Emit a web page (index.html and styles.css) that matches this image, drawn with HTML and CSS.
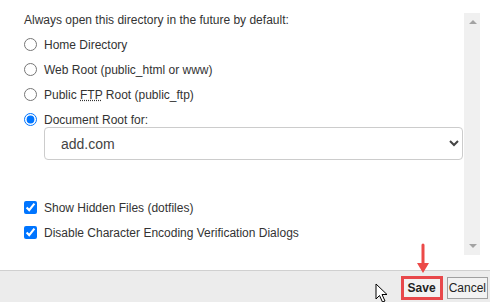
FILE: index.html
```html
<!DOCTYPE html>
<html lang="en">
<head>
    <meta charset="UTF-8">
    <title>Settings</title>
    <link rel="stylesheet" href="styles.css">
</head>
<body>
    <div class="dialog">
        <div class="panel">
            <div class="content">
                <p class="lead">Always open this directory in the future by default:</p>
                <label class="option"><input type="radio" name="dir"><span>Home Directory</span></label>
                <label class="option"><input type="radio" name="dir"><span>Web Root (public_html or www)</span></label>
                <label class="option"><input type="radio" name="dir"><span>Public <abbr title="File Transfer Protocol">FTP</abbr> Root (public_ftp)</span></label>
                <label class="option"><input type="radio" name="dir" checked><span>Document Root for:</span></label>
                <div class="select-wrap">
                    <select class="domain">
                        <option>add.com</option>
                    </select>
                </div>
                <div class="checks">
                    <label class="option"><input type="checkbox" checked><span>Show Hidden Files (dotfiles)</span></label>
                    <label class="option"><input type="checkbox" checked><span>Disable Character Encoding Verification Dialogs</span></label>
                </div>
            </div>
            <div class="scrollbar">
                <span class="arrow up"></span>
                <span class="arrow down"></span>
            </div>
        </div>
        <div class="footer">
            <span class="cursor">
                <svg width="14" height="20" viewBox="0 0 14 20">
                    <path d="M1 1 L1 16 L4.5 12.5 L7.5 19 L10 18 L7 11.5 L12 11.5 Z" fill="#fff" stroke="#000" stroke-width="1" stroke-linejoin="round"/>
                </svg>
            </span>
            <span class="pointer">
                <svg width="14" height="32" viewBox="0 0 14 32">
                    <line x1="7" y1="2" x2="7" y2="22" stroke="#ec4a48" stroke-width="3" stroke-linecap="round"/>
                    <path d="M1 20 L13 20 L7 30 Z" fill="#ec4a48"/>
                </svg>
            </span>
            <button class="btn save">Save</button>
            <button class="btn cancel">Cancel</button>
        </div>
    </div>
</body>
</html>
```

FILE: styles.css
```css
body {
    margin: 0;
    font-family: "Liberation Sans", Arial, sans-serif;
    font-size: 12px;
    color: #333;
    background: #fff;
}

.dialog {
    width: 490px;
    height: 302px;
    display: flex;
    flex-direction: column;
}

.panel {
    flex: 1;
    display: flex;
}

.content {
    flex: 1;
    padding: 13px 0 0 24px;
}

.lead {
    margin: 0 0 4px;
    line-height: 15px;
}

.option {
    display: flex;
    align-items: center;
    height: 25px;
    gap: 7px;
}

.option input {
    margin: 0;
    width: 13px;
    height: 13px;
}

abbr {
    text-decoration: underline dotted;
}

.select-wrap {
    padding: 0 0 0 20px;
    margin-top: -5px;
}

.domain {
    width: 419px;
    height: 33px;
    padding: 0 0 0 12px;
    font-family: "Liberation Sans", Arial, sans-serif;
    font-size: 14px;
    color: #444;
    border: 1px solid #ccc;
    border-radius: 4px;
    background: #fff;
}

.checks {
    margin-top: 35px;
}

.scrollbar {
    width: 17px;
    height: 242px;
    margin: 13px 10px 0 1px;
    background: #f0f0f0;
    position: relative;
}

.arrow {
    position: absolute;
    left: 5px;
    width: 0;
    height: 0;
    border-left: 4px solid transparent;
    border-right: 4px solid transparent;
}

.arrow.up {
    top: 7px;
    border-bottom: 4px solid #a3a3a3;
}

.arrow.down {
    bottom: 7px;
    border-top: 4px solid #a3a3a3;
}

.footer {
    height: 31px;
    border-top: 1px solid #d0d0d0;
    background: #ececec;
    display: flex;
    align-items: center;
    justify-content: flex-end;
    gap: 4px;
    padding: 0 2px 0 0;
    position: relative;
}

.btn {
    font-family: "Liberation Sans", Arial, sans-serif;
    font-size: 12px;
    color: #222;
    background: #f2f2f2;
    border: 1px solid #a0a0a0;
    height: 22px;
    margin-top: 3px;
}

.btn.save {
    font-weight: bold;
    border: 3px solid #e8484b;
    height: 24px;
    padding: 0 4px;
}

.btn.cancel {
    padding: 0 1px;
}

.cursor {
    position: absolute;
    left: 375px;
    top: 12px;
}

.pointer {
    position: absolute;
    left: 416px;
    top: -28px;
}
```
